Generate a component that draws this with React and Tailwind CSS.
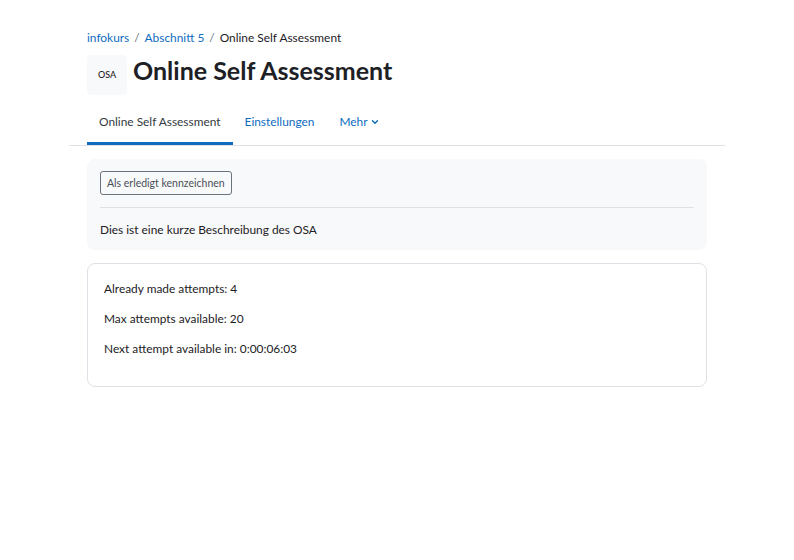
import { ChevronDown } from 'lucide-react';

export default function App() {
  return (
    <div className="min-h-[560px] w-[794px] bg-white text-[#1d2125]" style={{ fontFamily: 'Lato, "Noto Sans", sans-serif' }}>
      <div className="px-[69px] pt-[29px]">
        <div className="px-[18px]">
          <nav className="flex items-center gap-[5px] text-[11.9px] leading-[18px]">
            <a className="text-[#0f6cbf]">infokurs</a>
            <span className="text-[#6a737b]">/</span>
            <a className="text-[#0f6cbf]">Abschnitt 5</a>
            <span className="text-[#6a737b]">/</span>
            <span>Online Self Assessment</span>
          </nav>
          <div className="mt-[8px] flex items-center gap-[6px]">
            <div className="flex h-[40px] w-[40px] items-center justify-center rounded-[4px] bg-[#f8f9fa] text-[9px] font-medium">
              OSA
            </div>
            <h1 className="-mt-[10px] text-[25px] font-bold leading-[30px]">Online Self Assessment</h1>
          </div>
        </div>
        <div className="mt-[5px] flex border-b border-[#dee2e6] px-[18px]">
          <div className="border-b-[3px] border-[#0f6cbf] px-[12px] pt-[12px] pb-[10px] text-[11.9px] leading-[20px] text-[#343a40]">
            Online Self Assessment
          </div>
          <div className="px-[12px] pt-[12px] pb-[13px] text-[11.9px] leading-[20px] text-[#0f6cbf]">Einstellungen</div>
          <div className="flex items-center gap-[2px] px-[13px] pt-[12px] pb-[13px] text-[11.9px] leading-[20px] text-[#0f6cbf]">
            Mehr <ChevronDown className="h-[10px] w-[10px]" strokeWidth={3.5} />
          </div>
        </div>
        <div className="px-[18px]">
          <div className="mt-[13px] rounded-[8px] bg-[#f8f9fa] px-[13px] pt-[12px] pb-[11px]">
            <button className="block rounded-[3px] border border-[#6a737b] px-[6px] py-[4px] text-[10.5px] leading-[14px] text-[#495057]">
              Als erledigt kennzeichnen
            </button>
            <div className="mt-[12px] border-t border-[#dee2e6]" />
            <p className="mt-[13px] text-[11.9px] leading-[18px]">Dies ist eine kurze Beschreibung des OSA</p>
          </div>
          <div className="mt-[13px] rounded-[8px] border border-[#dee2e6] px-[16px] pt-[16px] pb-[28px] text-[11.9px] leading-[18px]">
            <p>Already made attempts: 4</p>
            <p className="mt-[12px]">Max attempts available: 20</p>
            <p className="mt-[12px]">Next attempt available in: 0:00:06:03</p>
          </div>
        </div>
      </div>
    </div>
  );
}
